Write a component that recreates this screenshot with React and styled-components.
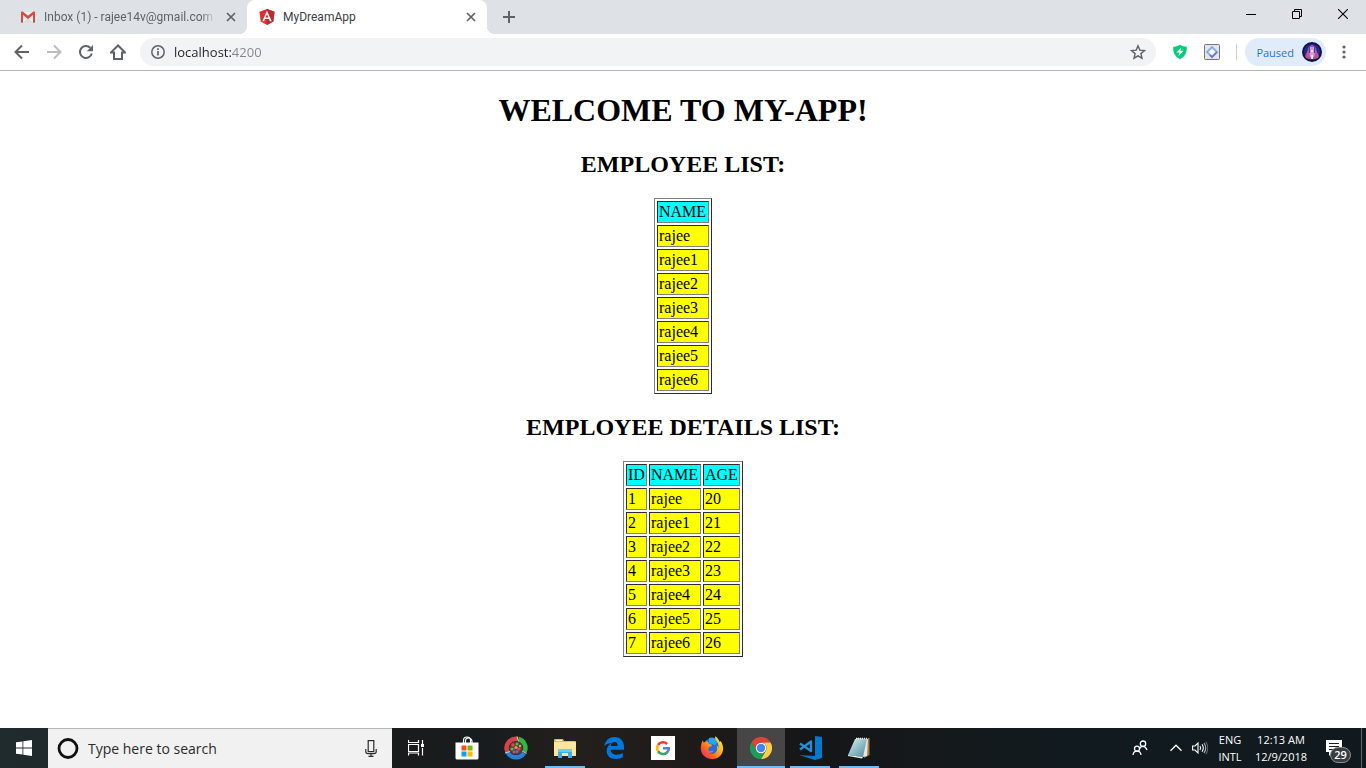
import React from "react";
import styled, { createGlobalStyle } from "styled-components";

const GlobalStyle = createGlobalStyle`
  *, *::before, *::after { box-sizing: border-box; }
  body { margin: 0; background: #fff; color: #000; }
  button, input { font: inherit; color: inherit; border: 0; padding: 0; margin: 0; background: none; }
  svg { display: block; flex: none; }
`;

const uiFont = `"Open Sans", "Noto Sans", sans-serif`;

const Screen = styled.div`
  display: flex;
  flex-direction: column;
  min-height: 100vh;
`;

/* Browser window */

const Chrome = styled.header`
  font-family: ${uiFont};
  border-bottom: 1px solid #b2b4b6;
`;

const TabStrip = styled.div`
  display: flex;
  height: 34px;
  background: #dee1e6;
`;

const Tab = styled.div`
  position: relative;
  display: flex;
  align-items: center;
  gap: 8px;
  width: ${(p) => (p.$active ? 240 : 247)}px;
  padding: 0 8px 0 ${(p) => (p.$active ? 12 : 20)}px;
  border-radius: 8px 8px 0 0;
  background: ${(p) => (p.$active ? "#fff" : "transparent")};
  color: ${(p) => (p.$active ? "#3c4043" : "#5f6368")};

  &::before,
  &::after {
    content: "";
    display: ${(p) => (p.$active ? "block" : "none")};
    position: absolute;
    bottom: 0;
    width: 8px;
    height: 8px;
  }
  &::before {
    left: -8px;
    background: radial-gradient(circle at 0 0, transparent 8px, #fff 8px);
  }
  &::after {
    right: -8px;
    background: radial-gradient(circle at 100% 0, transparent 8px, #fff 8px);
  }
`;

const TabTitle = styled.span`
  flex: 1;
  min-width: 0;
  white-space: nowrap;
  font-family: Roboto, ${uiFont};
  font-size: 12px;
  line-height: 16px;
  mask-image: ${(p) => (p.$fade ? "linear-gradient(to right, #000 92%, transparent)" : "none")};
`;

const TabButton = styled.button`
  display: grid;
  place-items: center;
  width: 16px;
  height: 16px;
  color: #5f6368;
`;

const NewTabButton = styled(TabButton)`
  align-self: center;
  width: 28px;
  height: 28px;
  margin-left: 8px;
`;

const WindowControls = styled.div`
  display: flex;
  margin-left: auto;
`;

const WindowButton = styled.button`
  display: grid;
  place-items: center;
  width: 46px;
  height: 28px;
  color: #000;
`;

const Toolbar = styled.div`
  display: flex;
  align-items: center;
  height: 36px;
  padding: 0 6px;
`;

const ToolButton = styled.button`
  display: grid;
  place-items: center;
  width: 32px;
  height: 28px;
  color: ${(p) => (p.$dim ? "#babcbe" : "#5f6368")};
`;

const AddressBar = styled.label`
  display: flex;
  align-items: center;
  flex: 1;
  gap: 8px;
  height: 28px;
  margin: 0 8px 0 6px;
  padding: 0 2px 0 10px;
  border-radius: 14px;
  background: #f1f3f4;
  color: #5f6368;
`;

const AddressInput = styled.input`
  flex: 1;
  min-width: 0;
  height: 20px;
  font-size: 13px;
  line-height: 20px;
  outline: 0;
  background: linear-gradient(to right, #202124 58px, #80868b 58px);
  background-clip: text;
  -webkit-background-clip: text;
  -webkit-text-fill-color: transparent;
`;

const Divider = styled.span`
  width: 1px;
  height: 16px;
  margin: 0 8px;
  background: #cfd1d4;
`;

const ProfileButton = styled.button`
  display: flex;
  align-items: center;
  gap: 8px;
  height: 28px;
  padding: 0 4px 0 11px;
  border-radius: 14px;
  background: #e1ecfb;
  color: #1a73e8;
  font-size: 11px;
`;

const MenuButton = styled(ToolButton)`
  margin: 0 0 0 2px;
`;

/* Page */

const Page = styled.main`
  display: flex;
  flex-direction: column;
  align-items: center;
  flex: 1;
  padding: 21px 8px 20px;
  font-family: "Liberation Serif", "Times New Roman", serif;
  font-size: 16px;
`;

const PageTitle = styled.h1`
  margin: 0 0 22px;
  font-size: 32px;
  line-height: 37px;
`;

const SectionTitle = styled.h2`
  margin: 0 0 20px;
  font-size: 24px;
  line-height: 27px;
`;

const DataTable = styled.table`
  margin-bottom: 20px;
  border: 1px solid;
  border-color: #808080 #2c2c2c #2c2c2c #808080;
  border-collapse: separate;
  border-spacing: 2px;
  line-height: 18px;
  text-align: left;

  th,
  td {
    padding: 1px;
    border: 1px solid;
    border-color: #2c2c2c #808080 #808080 #2c2c2c;
    font-weight: 400;
  }
  th { background: #00ffff; }
  td { background: #ffff00; }
`;

const Column = styled.col`
  width: ${(p) => p.$width}px;
`;

/* Taskbar */

const Taskbar = styled.footer`
  display: flex;
  height: 40px;
  color: #fff;
  font-family: ${uiFont};
  background: linear-gradient(to right, #202b2e 0, #1f292b 4%, #191c1b 29%, #171c1e 35%, #231f1c 42%, #1d1a19 52%, #151617 60%, #15191b 68%, #101a1f 80%, #10191e 100%);
`;

const TaskButton = styled.button`
  display: grid;
  place-items: center;
  width: 48px;
  height: 40px;
  background: ${(p) => (p.$active ? "#474646" : "transparent")};
  box-shadow: ${(p) => (p.$active ? "inset 0 -2px #76b9ed" : "none")};
`;

const OpenTaskButton = styled(TaskButton)`
  background: linear-gradient(#76b9ed, #76b9ed) bottom center / 40px 2px no-repeat;
`;

const SearchBox = styled.label`
  display: flex;
  align-items: center;
  gap: 9px;
  width: 344px;
  padding: 0 15px 0 9px;
  border-top: 1px solid #b5b5b5;
  background: #f1f1f1;
  color: #2b2b2b;
`;

const SearchInput = styled.input`
  flex: 1;
  min-width: 0;
  font-size: 14px;
  line-height: 20px;
  outline: 0;
  &::placeholder { color: #2b2b2b; opacity: 1; }
`;

const Apps = styled.nav`
  display: flex;
  gap: 1px;
  margin-left: 3px;
`;

const Tray = styled.div`
  display: flex;
  align-items: center;
  margin-left: auto;
`;

const TrayButton = styled.button`
  display: grid;
  place-items: center;
  width: ${(p) => p.$width}px;
  height: 40px;
  font-size: 11px;
  line-height: 17px;
`;

const ActionButton = styled(TrayButton)`
  position: relative;
  padding-right: 8px;
`;

const Badge = styled.span`
  position: absolute;
  left: 16px;
  top: 19px;
  width: 21px;
  height: 16px;
  border: 1px solid #8b8f91;
  border-radius: 8px;
  background: #3a3d3f;
  font-size: 11px;
  font-weight: 600;
  line-height: 14px;
  text-align: center;
`;

const ShowDesktop = styled.button`
  width: 5px;
  height: 40px;
  border-left: 1px solid #626b6f;
`;

/* Icons */

const Icon = ({ size = 16, width, height, box, children, ...rest }) => (
  <svg
    width={width || size}
    height={height || size}
    viewBox={box || `0 0 ${width || size} ${height || size}`}
    fill="none"
    stroke="currentColor"
    strokeWidth="1"
    aria-hidden="true"
    {...rest}
  >
    {children}
  </svg>
);

const GmailIcon = () => (
  <Icon stroke="none">
    <path d="M2 3h12v10.500H2z" fill="#eceff1" />
    <path d="M3 13.500 8 9l5 4.500z" fill="#d8dcde" />
    <path d="M1 3.500Q1 2.500 2 2.500h.7L8 6.700l5.300-4.200h.7q1 0 1 1V13q0 .7-.7.700H13V6L8 9.900 3 6v7.700H1.700Q1 13.700 1 13z" fill="#d54b3d" />
  </Icon>
);

const AngularIcon = () => (
  <Icon stroke="none">
    <path d="M8 0 15.500 2.700 14.300 12.500 8 16 1.700 12.500.5 2.700z" fill="#df2e31" />
    <path d="M8 0v16l6.300-3.500 1.200-9.800z" fill="#bd2a31" />
    <path d="M8 1.800 3.300 12.300h1.800l.9-2.400h4l.9 2.400h1.800zm0 3.500 1.400 3.200H6.600z" fill="#fff" fillRule="evenodd" />
  </Icon>
);

const CloseIcon = () => (
  <Icon size={10} strokeWidth="1.700"><path d="m1 1 8 8M9 1 1 9" /></Icon>
);
const PlusIcon = () => (
  <Icon size={12} strokeWidth="2"><path d="M6 0v12M0 6h12" /></Icon>
);
const MinimizeIcon = () => (
  <Icon size={10}><path d="M0 5.500h10" /></Icon>
);
const RestoreIcon = () => (
  <Icon size={10}><path d="M.5 2.500h7v7h-7zM2.500 2.500v-2h7v7h-2" /></Icon>
);
const WindowCloseIcon = () => (
  <Icon size={10} strokeWidth="1.100"><path d="m0 0 10 10M10 0 0 10" /></Icon>
);
const BackIcon = () => (
  <Icon strokeWidth="2"><path d="M15 8H2M8 1.500 1.500 8 8 14.500" /></Icon>
);
const ForwardIcon = () => (
  <Icon strokeWidth="2"><path d="M1 8h13M8 1.500 14.500 8 8 14.500" /></Icon>
);
const ReloadIcon = () => (
  <Icon strokeWidth="2">
    <path d="M13.800 9.500A6 6 0 1 1 12.300 3.700" />
    <path d="M15 1v6.200H8.800z" fill="currentColor" stroke="none" />
  </Icon>
);
const HomeIcon = () => (
  <Icon strokeWidth="2"><path d="M8 1.500.9 8.500H4V15h8V8.500h3.100z" /></Icon>
);
const InfoIcon = () => (
  <Icon strokeWidth="1.500">
    <circle cx="8" cy="8" r="6.200" />
    <path d="M8 7v4.500M8 4.300v1.700" strokeWidth="1.700" />
  </Icon>
);
const StarIcon = () => (
  <Icon strokeWidth="1.400">
    <path d="m8 1.800 1.800 4.300 4.700.4-3.600 3.100 1.100 4.600L8 11.800l-4 2.400 1.100-4.600-3.600-3.100 4.700-.4z" />
  </Icon>
);
const ShieldIcon = () => (
  <Icon stroke="none">
    <path d="M8 .8q3 2 6.800 2c.4 5.200-1.600 9.900-6.800 12.400C2.800 12.700.8 8 1.200 2.800 5 2.800 8 .8 8 .8z" fill="#0bcb7b" />
    <path d="m9.500 3.600-5.200 5h3.200l-1.200 3.600 5.400-5.400H8.300z" fill="#fff" />
  </Icon>
);
const DiamondIcon = () => (
  <Icon>
    <rect x=".5" y=".5" width="15" height="15" rx="1" fill="#e3e5ea" stroke="#71757c" />
    <path d="m8 3 5 5-5 5-5-5z" stroke="#84a9f3" strokeWidth="1.800" fill="#f5f7fc" />
    <path d="m13 8-5 5-2-2" stroke="#6871bd" strokeWidth="1.600" />
  </Icon>
);
const Avatar = () => (
  <Icon size={20} stroke="none">
    <circle cx="10" cy="10" r="10" fill="#10134a" />
    <circle cx="10" cy="10" r="8" fill="#25288a" />
    <path d="M6 6q4-6 8 0l1 7-2 4H7l-2-4z" fill="#9b5ab5" />
    <path d="M8 5h4l1 5-1 5H8l-1-5z" fill="#dc96c9" />
    <path d="m3 14 3-6 1 9-3-1zM17 14l-3-6-1 9 3-1z" fill="#c0508d" />
    <path d="M9 8h2v2H9zM9.300 13h1.700v4H9.300z" fill="#fff0ea" />
    <path d="M7.500 5v6M12.500 5v6" stroke="#383da7" />
  </Icon>
);
const DotsIcon = () => (
  <Icon stroke="none" fill="currentColor">
    <circle cx="8" cy="3" r="1.600" /><circle cx="8" cy="8" r="1.600" /><circle cx="8" cy="13" r="1.600" />
  </Icon>
);
const WindowsIcon = () => (
  <Icon stroke="none">
    <path d="M0 2.300 6.500 1.400v6.200H0zM7.300 1.300 16 0v7.600H7.300zM0 8.400h6.500v6.200L0 13.700zM7.300 8.400H16V16l-8.700-1.300z" fill="#fff" />
  </Icon>
);
const CortanaIcon = () => (
  <Icon size={22} strokeWidth="2.800"><circle cx="11" cy="10.500" r="9" stroke="#111" /></Icon>
);
const MicIcon = () => (
  <Icon width={12} height={17} strokeWidth="1.200">
    <rect x="3.200" y=".6" width="5.600" height="11" />
    <path d="M.8 9v2.500Q.8 13.700 3 13.700h6q2.200 0 2.200-2.200V9M6 13.700v2.500M3.500 16.300h5" />
  </Icon>
);
const TaskViewIcon = () => (
  <Icon>
    <path d="M.5 0v2.500h10V0M.5 15.500v-2.500h10v2.500M.5 4.500h10v7H.5zM14.500 0v4M14.500 8v7.500" strokeWidth="1.200" />
    <path d="M13 4h3v3h-3z" fill="#fff" stroke="none" />
  </Icon>
);
const StoreIcon = () => (
  <Icon size={24} stroke="none">
    <path d="M8.500 7V4.500q0-3.500 3.500-3.500t3.500 3.500V7M10.500 7V5q0-3 3-3T17 5v2" stroke="#fff" strokeWidth="1.200" />
    <path d="M.5 6.500h23v15.500q0 1.500-1.500 1.500H2q-1.500 0-1.500-1.500z" fill="#fff" />
    <path d="M6.500 9.500h5v5h-5z" fill="#f25022" /><path d="M12.500 9.500h5v5h-5z" fill="#7fba00" />
    <path d="M6.500 15.500h5v5h-5z" fill="#00a4ef" /><path d="M12.500 15.500h5v5h-5z" fill="#ffb900" />
  </Icon>
);
const SwirlIcon = () => (
  <Icon size={24} stroke="none">
    <path d="M3.500 16A9.300 9.300 0 0 1 14 3" stroke="#d5434b" strokeWidth="4.500" />
    <path d="M14.500 3A9.300 9.300 0 0 1 20.500 16" stroke="#35b643" strokeWidth="4.500" />
    <path d="M20 17A9.500 9.500 0 0 1 3.500 16" stroke="#287fd4" strokeWidth="4.500" />
    <path d="m1 17 5-1.500M13 .5l1.500 5M18 15l4.500 2.500" stroke="#f3f3fa" strokeWidth=".8" />
    <circle cx="12" cy="12" r="6.800" fill="#5b3b3c" />
    <g fill="#e2493e"><circle cx="9" cy="9" r="1.700" /><circle cx="15" cy="13" r="1.600" /><circle cx="10" cy="16" r="1.500" /></g>
    <g fill="#55b84d"><circle cx="13" cy="8" r="1.500" /><circle cx="8" cy="13" r="1.600" /></g>
    <g fill="#d9a83e"><circle cx="12" cy="11.500" r="1.600" /><circle cx="16" cy="10" r="1.200" /></g>
    <g fill="#7b66bd"><circle cx="13" cy="15.500" r="1.500" /><circle cx="10.500" cy="12.500" r="1" /></g>
  </Icon>
);
const FolderIcon = () => (
  <Icon width={22} height={20} stroke="none">
    <path d="M0 2q0-1 1-1h8l1 2h11q1 0 1 1v14H0z" fill="#e9b84c" />
    <path d="M2 2h6v1H2z" fill="#fff4cf" />
    <path d="M0 4h22v13q0 1-1 1H1q-1 0-1-1z" fill="#ffe69b" />
    <path d="M4 20v-8q0-1 1-1h12q1 0 1 1v8h-4v-5H8v5z" fill="#38afe5" />
    <path d="M4 12q0-1 1-1h12q1 0 1 1v2H4z" fill="#67cdf4" />
  </Icon>
);
const EdgeIcon = () => (
  <Icon width={20} height={22} stroke="none">
    <path d="M.2 9.500C1.300 3 5.500 0 10.500 0 16.500 0 20 4.200 20 9.500v3.200H6.500c.2 3.500 3 5 6.300 5 2.200 0 4.300-.6 6-1.600v4.200c-2 1.100-4.400 1.700-7 1.700C6 22 2.700 18.500 2.700 14c0-3.500 1.700-6.500 5-8.100C4.200 6 1.700 7.300.2 9.500zM6.800 8.900h6.900c0-2.700-1-4-3.200-4S7 6.500 6.800 8.900z" fill="#0079da" fillRule="evenodd" />
  </Icon>
);
const GoogleIcon = () => (
  <Icon size={24} stroke="none">
    <path d="M0 0h24v24H0z" fill="#fff" />
    <g strokeWidth="2.600">
      <path d="M7 9A5.900 5.900 0 0 1 16.200 8" stroke="#ea4335" />
      <path d="M7 9a6 6 0 0 0 0 6.200" stroke="#fbbc05" />
      <path d="M7 15.200a5.900 5.900 0 0 0 9 1.300" stroke="#34a853" />
      <path d="M12 12.300h5.800a5.900 5.900 0 0 1-2 4.400" stroke="#4285f4" />
    </g>
  </Icon>
);
const FirefoxIcon = () => (
  <Icon size={24} stroke="none">
    <defs><linearGradient id="fox" x1="1" y1="0" x2="0" y2="1"><stop offset="0" stopColor="#fff24a" /><stop offset=".4" stopColor="#ffb31a" /><stop offset=".7" stopColor="#ff5b23" /><stop offset="1" stopColor="#e31587" /></linearGradient></defs>
    <circle cx="12" cy="11" r="9" fill="#236de0" />
    <path d="M9 2q5-2 9 3l-3 4-6-2z" fill="#23a7ee" />
    <path d="M3 4c0 2 .5 2 1 2.500Q5.800 5 8 5.500c0 1 .3 2 2 2.500l2 1c-.2 1.500-2 1.500-3 2 0 1.500-.8 1.500-.8 3 1.500 2.200 3.200 1.200 5.300.5-1 2.500-4 2.500-5.500 2 5.500 3.700 11-.5 8.500-7 1.700 1 1.700 2 2 3C19 7.500 17 5.500 15.500 3.500 15 2 15 1.500 15.500.3c2 1.500 3.500 3.700 4.300 5.700l.8-1C24 10 24 15 20.500 19.500 17 24 8 24.500 3.500 19.500-.5 15 .5 8 3 4z" fill="url(#fox)" />
  </Icon>
);
const ChromeIcon = () => (
  <Icon size={22} stroke="none">
    <path d="M1.470 5.500A11 11 0 0 1 20.530 5.500H11A5.500 5.500 0 0 0 6.200 13.700z" fill="#df4537" />
    <path d="M20.530 5.500A11 11 0 0 1 11 22L15.800 13.700A5.500 5.500 0 0 0 11 5.500z" fill="#fdcd43" />
    <path d="M11 22A11 11 0 0 1 1.470 5.500L6.200 13.700A5.500 5.500 0 0 0 15.800 13.700z" fill="#1a9f5b" />
    <circle cx="11" cy="11" r="5.300" fill="#fff" />
    <circle cx="11" cy="11" r="4.200" fill="#4285f4" />
  </Icon>
);
const CodeIcon = () => (
  <Icon size={24} stroke="none">
    <path d="M17 0 24 1v21l-7 2-16-5 16 1z" fill="#007acc" />
    <path d="M2 7.500 13 15V5.500L2 13.500" stroke="#238fd7" strokeWidth="2.400" strokeLinejoin="round" />
  </Icon>
);
const NotepadIcon = () => (
  <Icon width={22} height={24} stroke="none">
    <defs><linearGradient id="note" x1="0" y1="0" x2="1" y2="1"><stop stopColor="#e3f4f5" /><stop offset=".5" stopColor="#91bdc6" /><stop offset="1" stopColor="#4e8a98" /></linearGradient></defs>
    <path d="M20 2h1.500v17L16 22z" fill="#a87d41" />
    <path d="m8 2 12 1-1 17-4 1z" fill="#e7e8e7" />
    <path d="M7 3h12l-4 18L0 19z" fill="url(#note)" />
    <path d="m0 19 15 2-1 1.500L0 20z" fill="#eef5f5" />
    <path d="M8 2.500h12" stroke="#e8f0ef" strokeWidth="1.500" strokeDasharray="1 1" />
  </Icon>
);
const PeopleIcon = () => (
  <Icon size={16} strokeWidth="1.300">
    <circle cx="11" cy="3.700" r="2.700" /><path d="M7.500 9q1-2.600 3.500-2.600T15 10" />
    <circle cx="5" cy="8.700" r="2.500" /><path d="M1 15q.5-3.800 4-3.800T9 15" />
  </Icon>
);
const ChevronIcon = () => (
  <Icon width={12} height={8} strokeWidth="1.400"><path d="m.5 6.800 5.500-5.500 5.500 5.500" /></Icon>
);
const VolumeIcon = () => (
  <Icon width={16} height={14} strokeWidth="1.100">
    <path d="M.6 5v4H3l3 3V2L3 5zM8 5q1.300 2 0 4M10 3.300q2.600 3.700 0 7.400" />
    <path d="M12 2q3.500 5 0 10" stroke="#b6babc" /><path d="M13.800.7q4 6.300 0 12.600" stroke="#5d6569" />
  </Icon>
);
const NotificationIcon = () => (
  <Icon stroke="none">
    <path d="M0 0h16v12H7l-4 4v-4H0z" fill="#fff" />
    <path d="M3 3.500h10M3 6.500h10M3 9.500h6" stroke="#172025" />
  </Icon>
);

/* Data */

const employees = ["rajee", "rajee1", "rajee2", "rajee3", "rajee4", "rajee5", "rajee6"].map(
  (name, i) => ({ id: i + 1, name, age: 20 + i })
);

const columns = {
  id: { label: "ID", width: 21 },
  name: { label: "NAME", width: 52 },
  age: { label: "AGE", width: 37 },
};

const EmployeeTable = ({ fields, label }) => (
  <DataTable aria-label={label}>
    <colgroup>{fields.map((f) => <Column key={f} $width={columns[f].width} />)}</colgroup>
    <thead>
      <tr>{fields.map((f) => <th key={f} scope="col">{columns[f].label}</th>)}</tr>
    </thead>
    <tbody>
      {employees.map((e) => (
        <tr key={e.id}>{fields.map((f) => <td key={f}>{e[f]}</td>)}</tr>
      ))}
    </tbody>
  </DataTable>
);

export default function App() {
  return (
    <Screen>
      <GlobalStyle />
      <Chrome>
        <TabStrip>
          <Tab>
            <GmailIcon />
            <TabTitle $fade>Inbox (1) - rajee14v@gmail.com -</TabTitle>
            <TabButton aria-label="Close tab"><CloseIcon /></TabButton>
          </Tab>
          <Tab $active>
            <AngularIcon />
            <TabTitle>MyDreamApp</TabTitle>
            <TabButton aria-label="Close tab"><CloseIcon /></TabButton>
          </Tab>
          <NewTabButton aria-label="New tab"><PlusIcon /></NewTabButton>
          <WindowControls>
            <WindowButton aria-label="Minimize"><MinimizeIcon /></WindowButton>
            <WindowButton aria-label="Restore"><RestoreIcon /></WindowButton>
            <WindowButton aria-label="Close"><WindowCloseIcon /></WindowButton>
          </WindowControls>
        </TabStrip>
        <Toolbar>
          <ToolButton aria-label="Back"><BackIcon /></ToolButton>
          <ToolButton $dim aria-label="Forward"><ForwardIcon /></ToolButton>
          <ToolButton aria-label="Reload"><ReloadIcon /></ToolButton>
          <ToolButton aria-label="Home"><HomeIcon /></ToolButton>
          <AddressBar>
            <InfoIcon />
            <AddressInput aria-label="Address" defaultValue="localhost:4200" spellCheck={false} />
            <ToolButton aria-label="Bookmark this page"><StarIcon /></ToolButton>
          </AddressBar>
          <ToolButton aria-label="Security extension"><ShieldIcon /></ToolButton>
          <ToolButton aria-label="Diagram extension"><DiamondIcon /></ToolButton>
          <Divider />
          <ProfileButton>Paused<Avatar /></ProfileButton>
          <MenuButton aria-label="Menu"><DotsIcon /></MenuButton>
        </Toolbar>
      </Chrome>

      <Page>
        <PageTitle>WELCOME TO MY-APP!</PageTitle>
        <SectionTitle>EMPLOYEE LIST:</SectionTitle>
        <EmployeeTable label="Employee list" fields={["name"]} />
        <SectionTitle>EMPLOYEE DETAILS LIST:</SectionTitle>
        <EmployeeTable label="Employee details" fields={["id", "name", "age"]} />
      </Page>

      <Taskbar>
        <TaskButton aria-label="Start"><WindowsIcon /></TaskButton>
        <SearchBox>
          <CortanaIcon />
          <SearchInput aria-label="Search" placeholder="Type here to search" />
          <MicIcon />
        </SearchBox>
        <TaskButton aria-label="Task view"><TaskViewIcon /></TaskButton>
        <Apps aria-label="Apps">
          <TaskButton aria-label="Store"><StoreIcon /></TaskButton>
          <TaskButton aria-label="Player"><SwirlIcon /></TaskButton>
          <OpenTaskButton aria-label="File Explorer"><FolderIcon /></OpenTaskButton>
          <TaskButton aria-label="Edge"><EdgeIcon /></TaskButton>
          <TaskButton aria-label="Google"><GoogleIcon /></TaskButton>
          <TaskButton aria-label="Firefox"><FirefoxIcon /></TaskButton>
          <TaskButton $active aria-label="Chrome"><ChromeIcon /></TaskButton>
          <OpenTaskButton aria-label="Visual Studio Code"><CodeIcon /></OpenTaskButton>
          <OpenTaskButton aria-label="Notepad"><NotepadIcon /></OpenTaskButton>
        </Apps>
        <Tray>
          <TrayButton $width={48} aria-label="People"><PeopleIcon /></TrayButton>
          <TrayButton $width={24} aria-label="Show hidden icons"><ChevronIcon /></TrayButton>
          <TrayButton $width={24} aria-label="Volume"><VolumeIcon /></TrayButton>
          <TrayButton $width={36}><span>ENG<br />INTL</span></TrayButton>
          <TrayButton $width={66}><span>12:13 AM<br />12/9/2018</span></TrayButton>
          <ActionButton $width={47} aria-label="Notifications"><NotificationIcon /><Badge>29</Badge></ActionButton>
          <ShowDesktop aria-label="Show desktop" />
        </Tray>
      </Taskbar>
    </Screen>
  );
}
